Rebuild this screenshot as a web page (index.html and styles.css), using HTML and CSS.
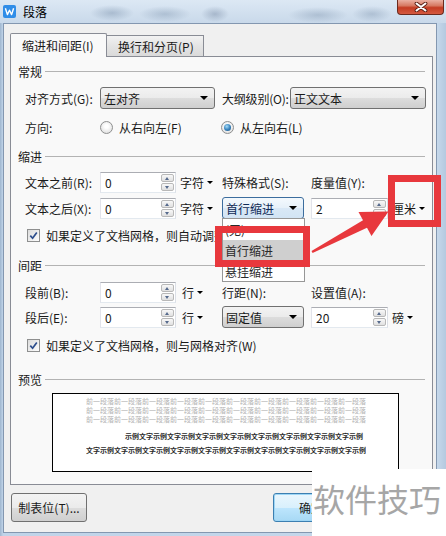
FILE: index.html
```html
<!DOCTYPE html>
<html lang="zh-CN">
<head>
<meta charset="utf-8">
<title>段落</title>
<link rel="stylesheet" href="styles.css">
</head>
<body>
<div class="window">
  <div class="titlebar">
    <span class="app-icon">
      <svg width="13" height="13" viewBox="0 0 13 13"><rect width="13" height="13" rx="2" fill="#2f8de8"/><polyline points="2.4,3.3 4.4,9.6 6.5,5.2 8.6,9.6 10.6,3.3" fill="none" stroke="#fff" stroke-width="1.4" stroke-linejoin="round"/></svg>
    </span>
    <span class="title">段落</span>
    <span class="close-btn">
      <svg width="14" height="10" viewBox="0 0 14 10"><path d="M2.5 1.5 L11.5 8.5 M11.5 1.5 L2.5 8.5" stroke="#5b2116" stroke-width="3.8" stroke-linecap="round"/><path d="M2.5 1.5 L11.5 8.5 M11.5 1.5 L2.5 8.5" stroke="#fff" stroke-width="2" stroke-linecap="round"/></svg>
    </span>
  </div>

  <div class="client">
    <div class="tabs">
      <div class="tab tab-active">缩进和间距(I)</div>
      <div class="tab tab-idle">换行和分页(P)</div>
    </div>

    <div class="panel">
      <div class="legend lg-general"><span>常规</span></div>
      <div class="row r-align">
        <span class="lbl">对齐方式(G):</span>
        <div class="combo c-align"><span>左对齐</span><i class="caret"></i></div>
        <span class="lbl2">大纲级别(O):</span>
        <div class="combo c-outline"><span>正文文本</span><i class="caret"></i></div>
      </div>
      <div class="row r-dir">
        <span class="lbl">方向:</span>
        <span class="radio-item r1"><i class="radio"></i>从右向左(F)</span>
        <span class="radio-item"><i class="radio checked"></i>从左向右(L)</span>
      </div>

      <div class="legend lg-indent"><span>缩进</span></div>
      <div class="gr r-before">
        <span>文本之前(R):</span>
        <div class="spin"><span>0</span><span class="spin-btns"><i class="up"></i><i class="down"></i></span></div>
        <span class="unit">字符<i class="mini-caret"></i></span>
        <span>特殊格式(S):</span>
        <span></span>
        <span>度量值(Y):</span>
      </div>
      <div class="gr r-after">
        <span>文本之后(X):</span>
        <div class="spin"><span>0</span><span class="spin-btns"><i class="up"></i><i class="down"></i></span></div>
        <span class="unit">字符<i class="mini-caret"></i></span>
        <div class="combo combo-focus"><span>首行缩进</span><i class="caret"></i></div>
        <span></span>
        <div class="spin"><span>2</span><span class="spin-btns"><i class="up"></i><i class="down"></i></span></div>
        <span class="unit">厘米<i class="mini-caret"></i></span>
      </div>
      <div class="chk-row ck-1">
        <i class="checkbox"><svg width="9" height="9" viewBox="0 0 9 9"><path d="M1.3 4.6 L3.6 7.2 L7.8 1.4" fill="none" stroke="#2c4d8c" stroke-width="1.7"/></svg></i>
        <span class="ck-text-clip">如果定义了文档网格，则自动调整右缩进(D)</span>
      </div>

      <div class="legend lg-spacing"><span>间距</span></div>
      <div class="gr r-sb">
        <span>段前(B):</span>
        <div class="spin"><span>0</span><span class="spin-btns"><i class="up"></i><i class="down"></i></span></div>
        <span class="unit unit-line">行<i class="mini-caret"></i></span>
        <span>行距(N):</span>
        <span></span>
        <span>设置值(A):</span>
      </div>
      <div class="gr r-sa">
        <span>段后(E):</span>
        <div class="spin"><span>0</span><span class="spin-btns"><i class="up"></i><i class="down"></i></span></div>
        <span class="unit unit-line">行<i class="mini-caret"></i></span>
        <div class="combo"><span>固定值</span><i class="caret"></i></div>
        <span></span>
        <div class="spin"><span>20</span><span class="spin-btns"><i class="up"></i><i class="down"></i></span></div>
        <span class="unit">磅<i class="mini-caret"></i></span>
      </div>
      <div class="chk-row ck-2">
        <i class="checkbox"><svg width="9" height="9" viewBox="0 0 9 9"><path d="M1.3 4.6 L3.6 7.2 L7.8 1.4" fill="none" stroke="#2c4d8c" stroke-width="1.7"/></svg></i>
        <span>如果定义了文档网格，则与网格对齐(W)</span>
      </div>

      <div class="legend lg-preview"><span>预览</span></div>
      <div class="preview">
        <div class="pv-line pv-prev">前一段落前一段落前一段落前一段落前一段落前一段落前一段落前一段落前一段落前一段落</div>
        <div class="pv-line pv-prev">前一段落前一段落前一段落前一段落前一段落前一段落前一段落前一段落前一段落前一段落</div>
        <div class="pv-line pv-prev">前一段落前一段落前一段落前一段落前一段落前一段落前一段落前一段落前一段落前一段落</div>
        <div class="pv-line pv-cur pv-first">示例文字示例文字示例文字示例文字示例文字示例文字示例文字示例文字示例</div>
        <div class="pv-line pv-cur pv-second">文字示例文字示例文字示例文字示例文字示例文字示例文字示例文字示例文字示例文字示例</div>
      </div>
    </div>

    <div class="footer">
      <div class="btn">制表位(T)...</div>
      <div class="btn btn-ok">确定</div>
    </div>
  </div>

  <div class="dropdown-list">
    <div class="dd-item">(无)</div>
    <div class="dd-item dd-sel">首行缩进</div>
    <div class="dd-item">悬挂缩进</div>
  </div>

  <div class="mark-box mark-1"></div>
  <div class="mark-box mark-2"></div>
  <svg class="mark-arrow" width="446" height="536" viewBox="0 0 446 536">
    <polygon points="311.5,251 363,220.3 358.5,212 388.5,211.5 371.5,236 367,227.8 312.6,253" fill="#e8383d"/>
  </svg>

  <div class="watermark">软件技巧</div>
</div>
</body>
</html>
```

FILE: styles.css
```css
* { box-sizing: border-box; }
html, body { margin: 0; padding: 0; }
body {
  width: 446px;
  height: 536px;
  overflow: hidden;
  font-family: "Noto Sans CJK SC", "Microsoft YaHei", sans-serif;
  font-size: 12px;
  color: #1a1a1a;
  background: #c3d6ea;
}
.window {
  position: relative;
  width: 446px;
  height: 536px;
  overflow: hidden;
  background: linear-gradient(90deg, #9fb6cf 0, #c0d4e9 3px, #c6d8eb 437px, #b4c9df 446px);
}

/* title bar */
.titlebar {
  height: 23px;
  display: flex;
  align-items: center;
  padding-left: 3px;
  background:
    radial-gradient(ellipse 22px 8px at 112px 13px, rgba(95,120,150,.35), transparent),
    radial-gradient(ellipse 26px 8px at 165px 14px, rgba(95,120,150,.3), transparent),
    radial-gradient(ellipse 14px 8px at 215px 14px, rgba(90,110,140,.35), transparent),
    radial-gradient(ellipse 30px 8px at 318px 15px, rgba(95,120,150,.3), transparent),
    radial-gradient(ellipse 20px 8px at 372px 14px, rgba(95,120,150,.3), transparent),
    linear-gradient(#dce8f4, #c9d9ea);
}
.app-icon { display: flex; width: 13px; height: 13px; }
.title { margin-left: 7px; color: #000; line-height: 14px; }
.close-btn {
  align-self: flex-start;
  margin-left: auto;
  margin-right: 2px;
  width: 47px;
  height: 15px;
  display: flex;
  align-items: center;
  justify-content: center;
  border: 1px solid #6b2a1e;
  border-top: none;
  border-radius: 0 0 4px 4px;
  background: linear-gradient(#eab0a2 0%, #d77a63 40%, #c43c23 55%, #d45a40 100%);
}

/* client area */
.client {
  margin-left: 3px;
  width: 434px;
  height: 510px;
  background: #f0f0f0;
  border: 1px solid #8397b0;
}
.tabs {
  display: flex;
  align-items: flex-end;
  padding: 9px 0 0 6px;
}
.tab {
  display: flex;
  align-items: center;
  padding-left: 11px;
  border: 1px solid #898c95;
  border-bottom: none;
  white-space: nowrap;
}
.tab-active {
  position: relative;
  z-index: 2;
  width: 97px;
  height: 24px;
  margin-bottom: -1px;
  background: #f9f9f9;
  border-radius: 2px 2px 0 0;
}
.tab-idle {
  width: 98px;
  height: 21px;
  margin-left: -1px;
  background: linear-gradient(#f2f2f2, #e4e4e4 50%, #dadada);
}

/* tab panel */
.panel {
  position: relative;
  z-index: 1;
  margin-left: 6px;
  width: 423px;
  height: 429px;
  border: 1px solid #898c95;
  background: #f9f9f9;
}
.legend {
  display: flex;
  align-items: center;
  padding: 0 7px 0 7px;
}
.legend::after {
  content: "";
  flex: 1;
  height: 0;
  margin-left: 3px;
  border-top: 1px solid #b3b3b3;
}
.lg-general { height: 28px; }
.lg-indent { height: 26px; }
.lg-spacing { height: 32px; }
.lg-preview { height: 27px; margin-top: 7px; }

.row {
  display: flex;
  align-items: center;
  padding-left: 14px;
  white-space: nowrap;
}
.r-align { height: 26px; }
.r-dir { height: 32px; }
.lbl { width: 75px; flex: none; }
.lbl2 { width: 68px; margin-left: 7px; flex: none; letter-spacing: -0.2px; }

.combo {
  position: relative;
  height: 22px;
  display: flex;
  align-items: center;
  padding-left: 3px;
  border: 1px solid #707070;
  border-radius: 3px;
  background: linear-gradient(#f3f3f3 0%, #ebebeb 50%, #dddddd 50%, #cfcfcf 100%);
  flex: none;
}
.caret {
  position: absolute;
  right: 6px;
  top: 8px;
  width: 0;
  height: 0;
  border-left: 4px solid transparent;
  border-right: 4px solid transparent;
  border-top: 4px solid #000;
}
.c-align { width: 115px; }
.c-outline { width: 136px; }
.combo-focus {
  border-color: #3c6d9e;
  color: #0f2a55;
  background: linear-gradient(#f4f9fd 0%, #e6f0f9 50%, #d9e8f6 50%, #d2e4f4 100%);
}

.radio-item { display: flex; align-items: center; gap: 6px; }
.r1 { width: 121px; }
.radio {
  width: 13px;
  height: 13px;
  border: 1px solid #8e8f8f;
  border-radius: 50%;
  background: radial-gradient(circle at 50% 40%, #ffffff 20%, #d6d6d6 100%);
  display: flex;
  align-items: center;
  justify-content: center;
}
.radio.checked::after {
  content: "";
  width: 7px;
  height: 7px;
  border-radius: 50%;
  background: radial-gradient(circle at 40% 35%, #a6dcf7 0%, #3b86c0 50%, #174c7a 100%);
}

/* grid rows */
.gr {
  display: grid;
  grid-template-columns: 75px 76px 46px 82px 7px 77px auto;
  align-items: center;
  padding-left: 14px;
  white-space: nowrap;
}
.r-before { height: 26px; }
.r-after { height: 26px; }
.r-sb { height: 22px; }
.r-sa { height: 28px; }

.spin {
  height: 21px;
  display: flex;
  align-items: center;
  padding-left: 4px;
  border: 1px solid;
  border-color: #abadb3 #dbdfe6 #e3e9ef #e2e3ea;
  background: #fff;
}
.spin-btns {
  margin-left: auto;
  margin-right: 1px;
  width: 13px;
  height: 17px;
  display: flex;
  flex-direction: column;
  gap: 1px;
}
.spin-btns i {
  position: relative;
  flex: 1;
  border: 1px solid #b8b8b8;
  border-radius: 2px;
  background: linear-gradient(#f8f8f8, #e0e0e0);
}
.spin-btns i::after {
  content: "";
  position: absolute;
  left: 3px;
  top: 2px;
  width: 0;
  height: 0;
  border-left: 2.5px solid transparent;
  border-right: 2.5px solid transparent;
}
.spin-btns .up::after { border-bottom: 3px solid #566a8c; }
.spin-btns .down::after { border-top: 3px solid #566a8c; }

.unit { display: flex; align-items: center; padding-left: 4px; }
.unit-line { padding-left: 6px; }
.mini-caret {
  margin-left: 3px;
  width: 0;
  height: 0;
  border-left: 3px solid transparent;
  border-right: 3px solid transparent;
  border-top: 3px solid #000;
}

.chk-row {
  height: 28px;
  display: flex;
  align-items: center;
  gap: 6px;
  padding-left: 16px;
  white-space: nowrap;
}
.ck-text-clip {
  display: block;
  max-width: 175px;
  overflow: hidden;
}
.checkbox {
  width: 13px;
  height: 13px;
  border: 1px solid #8e8f8f;
  background: linear-gradient(135deg, #dcdcdc, #fdfdfd);
  display: flex;
  align-items: center;
  justify-content: center;
}

/* preview */
.preview {
  margin-left: 41px;
  width: 347px;
  height: 79px;
  border: 1px solid #000;
  background: #fff;
  padding: 3px 0 0 33px;
}
.pv-line {
  width: 280px;
  height: 9px;
  font-size: 7px;
  line-height: 9px;
  white-space: nowrap;
  overflow: hidden;
}
.pv-prev { color: #b2b2b2; }
.pv-cur { color: #2a2a2a; font-weight: bold; }
.pv-first { margin-top: 8px; padding-left: 39px; }
.pv-second { margin-top: 5px; }

/* footer */
.footer {
  display: flex;
  width: 308px;
  overflow: hidden;
  margin-top: 8px;
  padding-left: 7px;
}
.btn {
  flex: none;
  width: 76px;
  height: 29px;
  display: flex;
  align-items: center;
  justify-content: center;
  border: 1px solid #707070;
  border-radius: 3px;
  background: linear-gradient(#f3f3f3 0%, #ebebeb 50%, #dddddd 50%, #cfcfcf 100%);
  white-space: nowrap;
}
.btn-ok {
  margin-left: 186px;
  border-color: #3c7fb1;
  box-shadow: inset 0 0 0 1px #9ed6f5;
  background: linear-gradient(#eaf6fd 0%, #d9f0fc 50%, #bee6fd 50%, #a7d9f5 100%);
}

/* overlays */
.dropdown-list {
  position: absolute;
  left: 222px;
  top: 218px;
  width: 83px;
  height: 64px;
  border: 1px solid #979797;
  background: #fff;
  z-index: 5;
}
.dd-item {
  height: 21px;
  line-height: 21px;
  padding-left: 2px;
  color: #2a2a2a;
}
.dd-sel { background: #cfcfcf; }

.mark-box {
  position: absolute;
  border: 7px solid #e8383d;
  z-index: 6;
}
.mark-1 { left: 215px; top: 226px; width: 95px; height: 41px; }
.mark-2 { left: 388px; top: 175px; width: 53px; height: 52px; }
.mark-arrow {
  position: absolute;
  left: 0;
  top: 0;
  z-index: 7;
  pointer-events: none;
}

.watermark {
  position: absolute;
  left: 312px;
  top: 469px;
  width: 134px;
  height: 67px;
  z-index: 8;
  background: #fff;
  padding: 13px 0 0 1px;
  font-size: 32px;
  line-height: 32px;
  color: #a6a6a6;
  white-space: nowrap;
}
```
